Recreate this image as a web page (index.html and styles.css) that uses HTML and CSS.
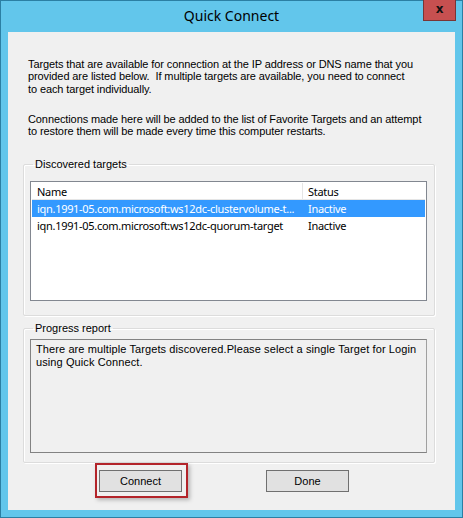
FILE: index.html
```html
<!DOCTYPE html>
<html lang="en">
<head>
    <meta charset="UTF-8">
    <meta name="viewport" content="width=device-width, initial-scale=1.0">
    <title>Quick Connect</title>
    <link rel="stylesheet" href="styles.css">
</head>
<body>
    <div class="window">
        <div class="titlebar">
            <span class="title">Quick Connect</span>
            <span class="close">x</span>
        </div>

        <div class="client">
            <p class="intro">Targets that are available for connection at the IP address or DNS name that you<br>provided are listed below.&nbsp; If multiple targets are available, you need to connect<br>to each target individually.</p>
            <p class="intro">Connections made here will be added to the list of Favorite Targets and an attempt<br>to restore them will be made every time this computer restarts.</p>

            <fieldset class="group targets">
                <legend>Discovered targets</legend>
                <div class="listview">
                    <div class="row header">
                        <span class="col-name">Name</span>
                        <span class="col-status">Status</span>
                    </div>
                    <div class="row selected">
                        <span class="col-name">iqn.1991-05.com.microsoft:ws12dc-clustervolume-t...</span>
                        <span class="col-status">Inactive</span>
                    </div>
                    <div class="row">
                        <span class="col-name">iqn.1991-05.com.microsoft:ws12dc-quorum-target</span>
                        <span class="col-status">Inactive</span>
                    </div>
                </div>
            </fieldset>

            <fieldset class="group progress">
                <legend>Progress report</legend>
                <div class="report">There are multiple Targets discovered.Please select a single Target for Login<br>using Quick Connect.</div>
            </fieldset>

            <div class="buttons">
                <div class="highlight">
                    <button class="btn">Connect</button>
                </div>
                <button class="btn">Done</button>
            </div>
        </div>
    </div>
</body>
</html>
```

FILE: styles.css
```css
* {
    box-sizing: border-box;
}

body {
    margin: 0;
    font-family: "Liberation Sans", Arial, sans-serif;
    font-size: 11px;
    color: #000;
}

.window {
    width: 463px;
    height: 518px;
    border: 1px solid #2b7fa3;
    background: #62c6eb;
    padding: 0 7px 7px 7px;
    display: flex;
    flex-direction: column;
}

.titlebar {
    height: 31px;
    position: relative;
    text-align: center;
}

.title {
    display: inline-block;
    font-family: "Noto Sans", sans-serif;
    font-size: 14px;
    line-height: 30px;
}

.close {
    position: absolute;
    top: -1px;
    right: -1px;
    width: 33px;
    height: 21px;
    background: #c75050;
    border: 1px solid #7a3535;
    border-top: none;
    font-family: "DejaVu Sans", sans-serif;
    font-weight: bold;
    font-size: 12px;
    line-height: 18px;
    text-align: center;
    color: #111;
}

.client {
    flex: 1;
    background: #f0f0f0;
    padding: 26px 0 0 15px;
    display: flex;
    flex-direction: column;
}

.intro {
    margin: 0 0 18px 5px;
    white-space: nowrap;
    line-height: 12.3px;
    letter-spacing: -0.1px;
}

.group {
    width: 412px;
    margin: 0;
    padding: 0 7px 0 6px;
    border: 1px solid #dcdcdc;
    border-radius: 2px;
    box-shadow: inset 1px 1px 0 #fff, 1px 1px 0 #fff;
}

.group legend {
    padding: 0 2px;
    margin-left: 3px;
    line-height: 12px;
}

.targets {
    margin-top: 3px;
    height: 158px;
}

.listview {
    margin-top: 11px;
    height: 120px;
    border: 1px solid #828790;
    background: #fff;
    font-family: "Noto Sans", sans-serif;
    font-size: 11px;
    letter-spacing: -0.3px;
    padding: 1px;
}

.row {
    display: flex;
    height: 17px;
    line-height: 17px;
}

.header {
    border-bottom: 1px solid #e5e5e5;
}

.col-name {
    width: 271px;
    padding-left: 5px;
    white-space: nowrap;
    overflow: hidden;
}

.col-status {
    padding-left: 5px;
}

.header .col-name {
    border-right: 1px solid #e5e5e5;
}

.selected {
    background: #3399ff;
    color: #fff;
}

.progress {
    margin-top: 6px;
    height: 141px;
}

.report {
    margin-top: 5px;
    height: 114px;
    border: 1px solid #828282;
    border-right-color: #a0a0a0;
    padding: 3px 5px;
    line-height: 13px;
    letter-spacing: 0.1px;
}

.buttons {
    display: flex;
    align-items: center;
    padding-left: 72px;
}

.highlight {
    border: 2px solid #b3242a;
    padding: 5px 4px 4px 2px;
    box-shadow: 2px 2px 4px rgba(0, 0, 0, 0.25);
}

.btn {
    width: 83px;
    height: 22px;
    border: 1px solid #707070;
    background: #e1e1e1;
    font-family: "Liberation Sans", Arial, sans-serif;
    font-size: 11px;
    color: #000;
    padding: 0;
}

.highlight + .btn {
    margin-left: 78px;
}
```
